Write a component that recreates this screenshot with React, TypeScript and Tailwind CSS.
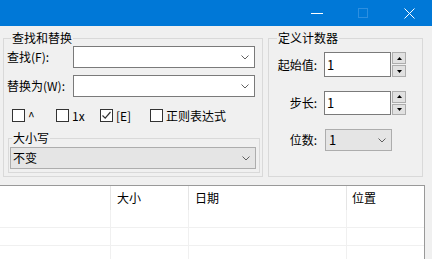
import React from "react";

// Find / replace dialog with a counter group and a results list underneath.
const font = { fontFamily: '"Noto Sans CJK SC", "Noto Sans", sans-serif' };

function Chevron() {
  return (
    <svg width="8" height="5" viewBox="0 0 8 5" className="shrink-0">
      <path d="M0.5 0.5 L4 4 L7.5 0.5" fill="none" stroke="#606060" strokeWidth="1" />
    </svg>
  );
}

function ComboInput({ gray = false, text = "" }: { gray?: boolean; text?: string }) {
  return (
    <div
      className={
        "flex h-[22px] items-center justify-between pl-[2px] pr-[5px] " +
        (gray ? "border border-[#adadad] bg-[#e5e5e5]" : "border border-[#7a7a7a] bg-white")
      }
    >
      <span className="text-[12px] leading-[14px] text-black">{text}</span>
      <Chevron />
    </div>
  );
}

function Check({ label, checked = false }: { label: string; checked?: boolean }) {
  return (
    <div className="flex items-center gap-[3px]">
      <div className="flex h-[13px] w-[13px] items-center justify-center border border-[#333] bg-white">
        {checked && (
          <svg width="11" height="11" viewBox="0 0 11 11">
            <path d="M1.5 5.5 L4.2 8.2 L9.5 2" fill="none" stroke="#333" strokeWidth="1.2" />
          </svg>
        )}
      </div>
      <span className="text-[12px] leading-[14px] text-black">{label}</span>
    </div>
  );
}

function Spin() {
  return (
    <div className="ml-px flex w-[14px] flex-col gap-px self-stretch">
      <div className="flex flex-1 items-center justify-center border border-[#adadad] bg-[#e1e1e1]">
        <svg width="5" height="3" viewBox="0 0 5 3"><path d="M2.5 0 L5 3 L0 3 Z" fill="#000" /></svg>
      </div>
      <div className="flex flex-1 items-center justify-center border border-[#adadad] bg-[#e1e1e1]">
        <svg width="5" height="3" viewBox="0 0 5 3"><path d="M0 0 L5 0 L2.5 3 Z" fill="#000" /></svg>
      </div>
    </div>
  );
}

export default function App() {
  return (
    <div className="h-[259px] w-[432px] overflow-hidden bg-[#f0f0f0] text-black" style={font}>
      {/* title bar */}
      <div className="flex h-[26px] items-center justify-end bg-[#0078d7]">
        <div className="flex h-full w-[46px] items-center justify-center">
          <div className="h-px w-[12px] bg-white" />
        </div>
        <div className="flex h-full w-[46px] items-center justify-center">
          <div className="h-[10px] w-[10px] border border-[#2d8fe0]" />
        </div>
        <div className="flex h-full w-[46px] items-center justify-center">
          <svg width="11" height="11" viewBox="0 0 11 11">
            <path d="M0.5 0.5 L10.5 10.5 M10.5 0.5 L0.5 10.5" stroke="#fff" strokeWidth="1" />
          </svg>
        </div>
      </div>

      <div className="flex pt-[5px]">
        {/* find and replace */}
        <fieldset className="ml-[3px] h-[146px] w-[260px] border border-[#d9d9d9]">
          <legend className="ml-[7px] px-px text-[12px] leading-[14px]">查找和替换</legend>
          <div className="mt-px flex items-center">
            <span className="ml-[3px] w-[66px] text-[12px] leading-[14px]">查找(F):</span>
            <div className="w-[182px]"><ComboInput /></div>
          </div>
          <div className="mt-[7px] flex items-center">
            <span className="ml-[3px] w-[66px] text-[12px] leading-[14px]">替换为(W):</span>
            <div className="w-[182px]"><ComboInput /></div>
          </div>
          <div className="mt-[11px] flex h-[15px] items-center pl-[8px]">
            <div className="w-[44px]"><Check label="^" /></div>
            <div className="w-[44px]"><Check label="1x" /></div>
            <div className="w-[50px]"><Check label="[E]" checked /></div>
            <Check label="正则表达式" />
          </div>
          <fieldset className="ml-[4px] mt-[8px] h-[42px] w-[252px] border border-[#d9d9d9]">
            <legend className="ml-[3px] px-px text-[12px] leading-[14px]">大小写</legend>
            <div className="ml-px mt-[2px] w-[246px]"><ComboInput gray text="不变" /></div>
          </fieldset>
        </fieldset>

        {/* counter */}
        <fieldset className="ml-[5px] h-[146px] w-[155px] border border-[#d9d9d9]">
          <legend className="ml-[8px] px-px text-[12px] leading-[14px]">定义计数器</legend>
          <div className="mt-[7px] flex h-[25px] items-center">
            <span className="ml-[8px] w-[40px] text-right text-[12px] leading-[14px]">起始值:</span>
            <div className="ml-[7px] flex h-full w-[67px] items-center border border-[#7a7a7a] bg-white pl-[2px] text-[13px]">1</div>
            <Spin />
          </div>
          <div className="mt-[14px] flex h-[24px] items-center">
            <span className="ml-[8px] w-[40px] text-right text-[12px] leading-[14px]">步长:</span>
            <div className="ml-[7px] flex h-full w-[67px] items-center border border-[#7a7a7a] bg-white pl-[2px] text-[13px]">1</div>
            <Spin />
          </div>
          <div className="mt-[14px] flex items-center">
            <span className="ml-[8px] w-[40px] text-right text-[12px] leading-[14px]">位数:</span>
            <div className="ml-[8px] flex h-[22px] w-[67px] items-center justify-between border border-[#adadad] bg-[#e5e5e5] pl-[3px] pr-[5px]">
              <span className="text-[13px]">1</span>
              <Chevron />
            </div>
          </div>
        </fieldset>
      </div>

      {/* results list */}
      <div className="mt-[8px] h-[80px] w-[425px] border-r border-t border-[#999] bg-white">
        <div className="grid h-[24px] grid-cols-[110px_78px_158px_1fr] text-[12px] leading-[14px]">
          <div />
          <div className="flex items-center border-l border-[#e5e5e5] pl-[6px]">大小</div>
          <div className="flex items-center border-l border-[#e5e5e5] pl-[6px]">日期</div>
          <div className="flex items-center border-l border-[#e5e5e5] pl-[5px]">位置</div>
        </div>
        {[0, 1, 2].map((r) => (
          <div key={r} className="grid h-[18px] grid-cols-[110px_78px_158px_1fr] border-b border-[#f0f0f0]">
            <div />
            <div className="border-l border-[#f0f0f0]" />
            <div className="border-l border-[#f0f0f0]" />
            <div className="border-l border-[#f0f0f0]" />
          </div>
        ))}
      </div>
    </div>
  );
}
